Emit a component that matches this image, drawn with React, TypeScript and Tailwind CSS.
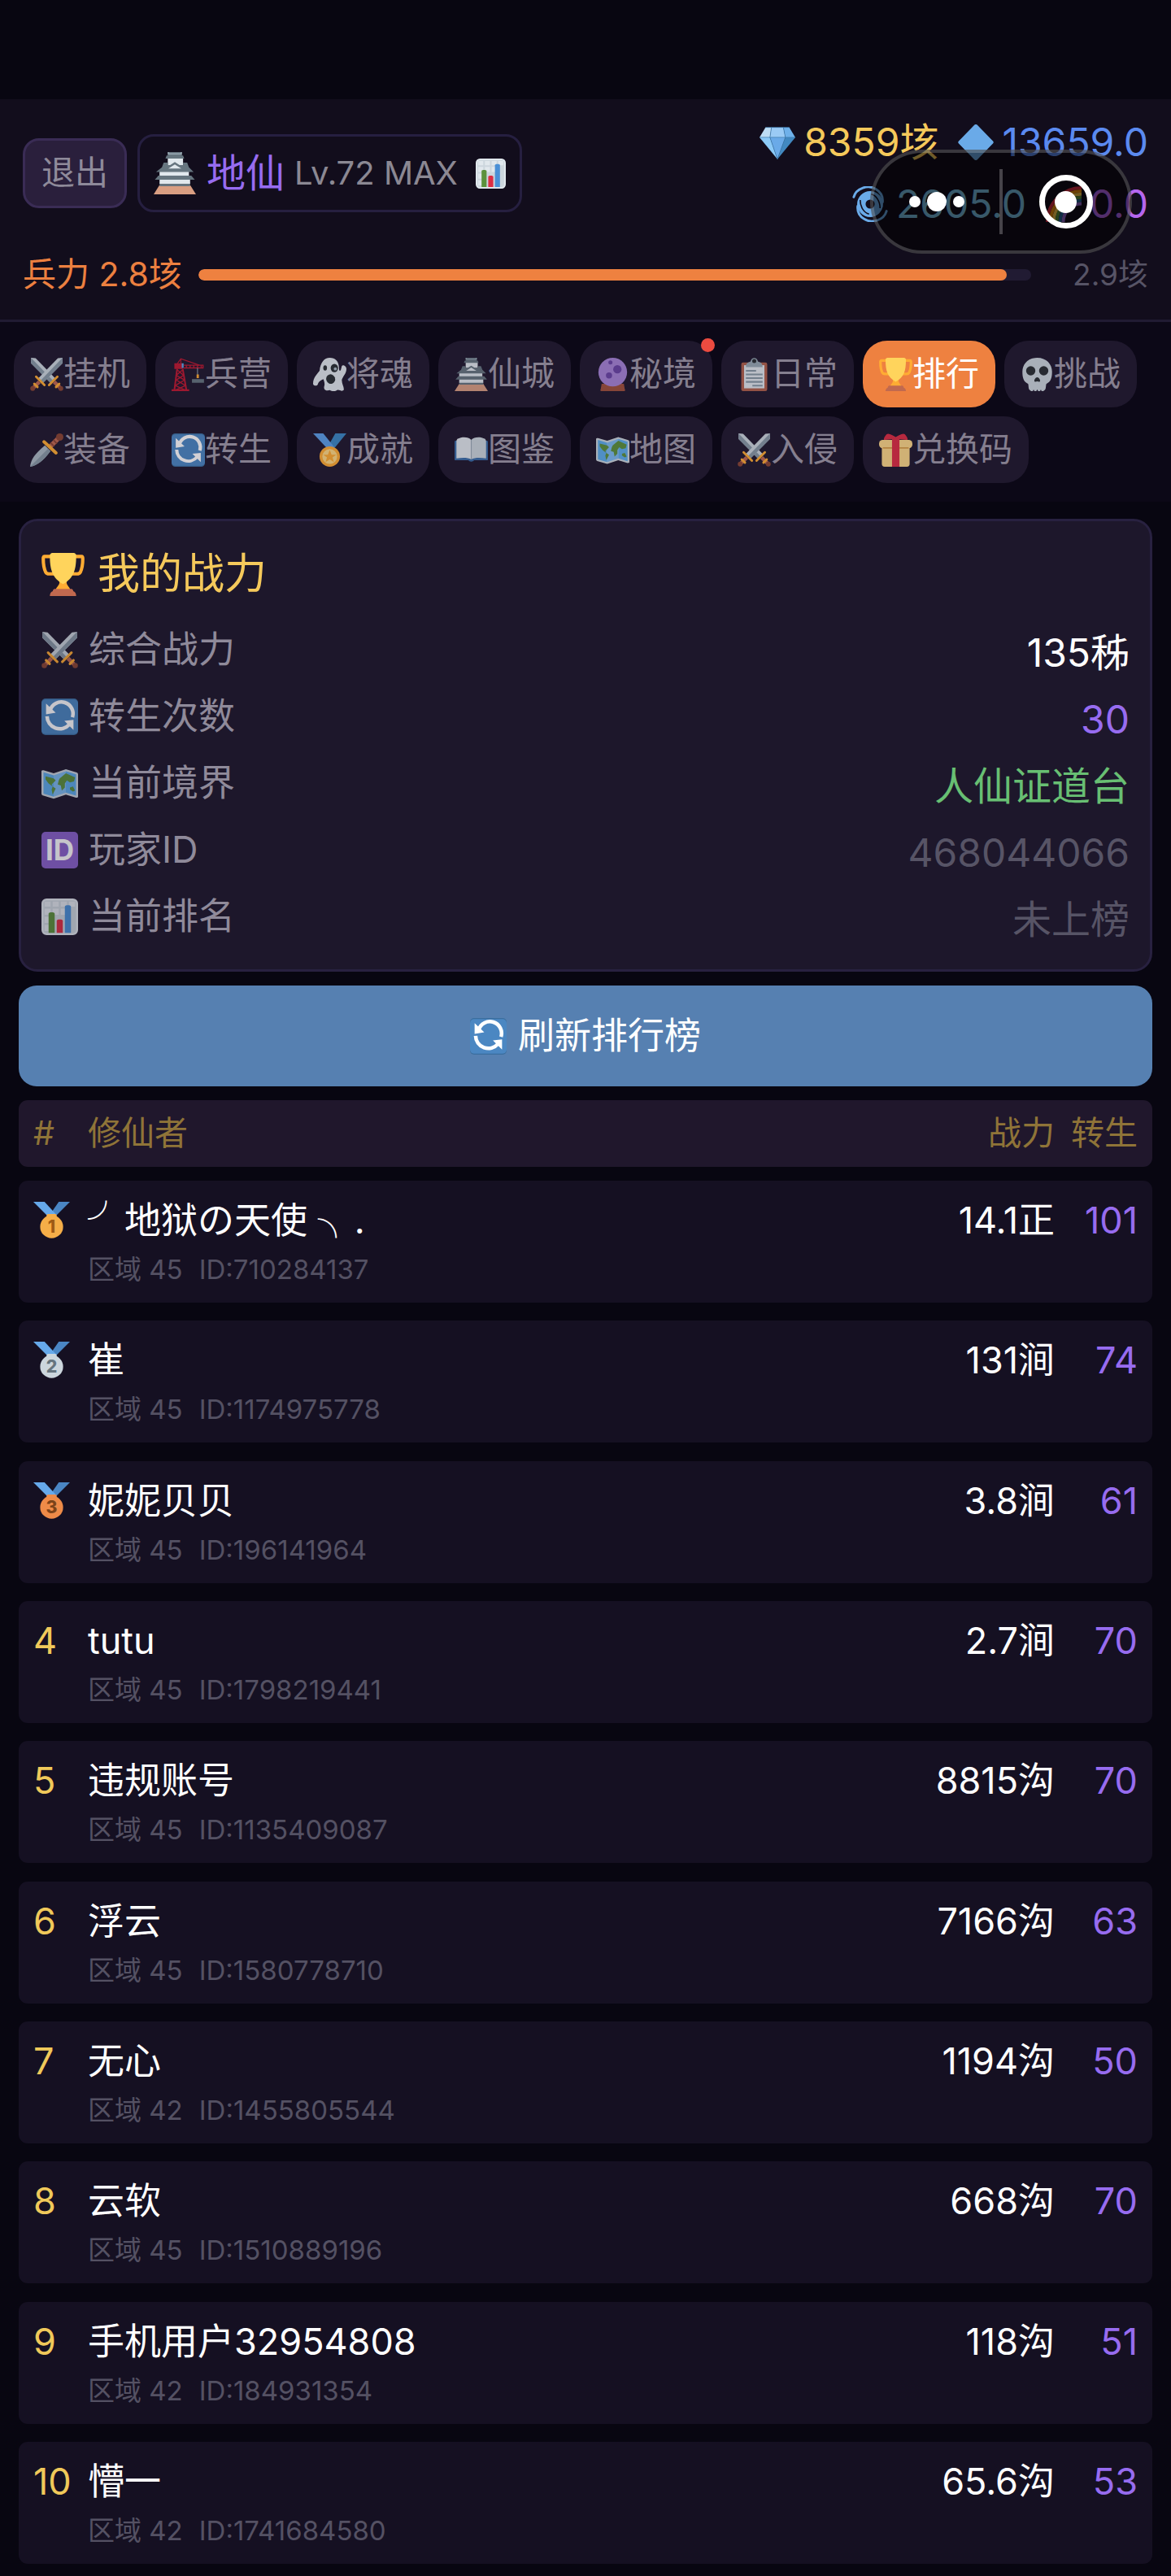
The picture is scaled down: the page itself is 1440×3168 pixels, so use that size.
import { useState } from 'react';
import type { ReactNode } from 'react';

type IconProps = { className?: string };

function Svg({ className = '', children }: { className?: string; children: ReactNode }) {
  return (
    <svg viewBox="0 0 36 36" className={`shrink-0 ${className}`} aria-hidden="true">
      {children}
    </svg>
  );
}

function Castle({ className }: IconProps) {
  return (
    <Svg className={className}>
      <path fill="#D99E82" d="M5 28h26l5 8H0z" />
      <path fill="#66757F" d="M5 26h26v3H5z" />
      <path fill="#E1E8ED" d="M5 23h26v4H5zM5 16h25v5H5zM12 4h13v7H12z" />
      <path fill="#66757F" d="M4 20h28l3 3.500H1zM11 3h14l1 2.500H10zM12 0h12v3H12z" />
      <path fill="#66757F" d="M8.500 9h3.500v2h2l4-2.500 4 2.500h3V9h3.500l1.500 4 4 4H2l5-4z" />
      <path fill="#E1E8ED" d="M18 10.500l5.500 3.500h-11z" />
      <path fill="#99AAB5" d="M12 0h1v1h10V0h1v2H12z" />
    </Svg>
  );
}

function Sword() {
  return (
    <g>
      <path fill="#CCD6DD" d="M1 0l5 .5L28 23l-5 5L1 6z" />
      <path fill="#8899A6" d="M1 0l24.500 25.500L23 28 1 6z" />
      <path stroke="#BF6952" strokeWidth="4" d="M26 26l6 6" />
      <path stroke="#FFAC33" strokeWidth="2.500" strokeLinecap="round" d="M20.500 29.500l9-9M28 31.500l3.500-3.500" />
      <circle cx="33.200" cy="33.200" r="2.600" fill="#8A4633" />
    </g>
  );
}

function Swords({ className }: IconProps) {
  return (
    <Svg className={className}>
      <Sword />
      <g transform="matrix(-1 0 0 1 36 0)">
        <Sword />
      </g>
    </Svg>
  );
}

function Dagger({ className }: IconProps) {
  return (
    <Svg className={className}>
      <path fill="#AAB8C2" d="M0 36c1-8 5-14 16-23l6 6C14 30 8 34 0 36z" />
      <path fill="#8899A6" d="M0 36L19.500 16.500 22 19C14 30 8 34 0 36z" />
      <path stroke="#BF6952" strokeWidth="5" d="M21 15l9-9" />
      <path stroke="#8A4633" strokeWidth="1.500" d="M22 10l4 4M25 7l4 4" />
      <path stroke="#FFAC33" strokeWidth="3.500" strokeLinecap="round" d="M15 9l13 12" />
      <circle cx="32" cy="4" r="4" fill="#8A4633" />
    </Svg>
  );
}

function Crane({ className }: IconProps) {
  return (
    <Svg className={className}>
      <path fill="none" stroke="#BE1931" strokeWidth="1" d="M5 8l5-7 20 7M10 1v7" />
      <path fill="#BE1931" d="M3 6h9v6H3zM0 34h19v2H0z" />
      <path fill="#55ACEE" d="M11 6h2v5h-2z" />
      <path fill="none" stroke="#BE1931" strokeWidth="1.200" d="M13 8h21v3H13M16 8v3M20 8v3M24 8v3M28 8v3M32 8v3" />
      <path fill="none" stroke="#BE1931" strokeWidth="1.800" d="M6 12L3 35M12 12l4 23" />
      <path fill="none" stroke="#BE1931" strokeWidth="1.200" d="M6 13l7 6-8 5 10 6-11 5M12 13l-7 6 9 5-10 6 11 5" />
      <path stroke="#8899A6" strokeWidth="1" d="M28 11v8" />
      <path fill="#FFAC33" d="M27 18h2.500v4H27z" />
      <path fill="#66757F" d="M22 23h13v4H22z" />
    </Svg>
  );
}

function Ghost({ className }: IconProps) {
  return (
    <Svg className={className}>
      <path
        fill="#E1E8ED"
        d="M18 0c6 0 10 4 10 11 0 3 1 4 2 2l1-4c1-2 5 0 5 3 0 5-4 8-5 12 0 5 3 8 2 11-2 2-5-1-7 0-3 2-6 1-8 0-3 1-7 0-6-4 1-3 0-6-1-8-2 1-5 2-6 6-1 2-5 1-5-1 0-7 5-11 7-14C8 5 12 0 18 0z"
      />
      <ellipse cx="13" cy="11" rx="2" ry="2.800" fill="#292F33" />
      <ellipse cx="23" cy="11" rx="4" ry="4.500" fill="#292F33" />
      <circle cx="24" cy="12" r="1.700" fill="#AAB8C2" />
      <ellipse cx="19" cy="23" rx="4.800" ry="5.200" fill="#292F33" transform="rotate(-20 19 23)" />
    </Svg>
  );
}

function CrystalBall({ className }: IconProps) {
  return (
    <Svg className={className}>
      <path fill="#A0513B" d="M6 28h24l1 6c1 1 0 2-1 2H6c-1 0-2-1-1-2z" />
      <circle cx="18" cy="15.500" r="15.500" fill="#A684D6" />
      <g fill="#6A45A6">
        <ellipse cx="23" cy="12.500" rx="4.500" ry="4.500" />
        <circle cx="14" cy="19" r="3.300" />
        <circle cx="15.500" cy="5" r="2.200" />
      </g>
    </Svg>
  );
}

function Clipboard({ className }: IconProps) {
  return (
    <Svg className={className}>
      <rect x="4" y="5" width="28" height="31" rx="2" fill="#B0614B" />
      <path fill="#E1E8ED" d="M7 8h22v25H7z" />
      <path fill="#99AAB5" d="M9 10c0-5 3-5 5-6 1-5 7-5 8 0 2 1 5 1 5 6z" />
      <circle cx="18" cy="3.500" r="2.200" fill="#292F33" />
      <path stroke="#8899A6" strokeWidth="1.800" d="M9 14h11M9 18h18M9 22h18M9 26h18M16 30h11" />
    </Svg>
  );
}

function Trophy({ className }: IconProps) {
  return (
    <Svg className={className}>
      <path
        fill="none"
        stroke="#FFAC33"
        strokeWidth="2.800"
        d="M8 3H2.500c-1 0-1 1-1 2 0 4 1 9 2 11 .500 1 1.500 1.500 3 1.500H13M28 3h5.500c1 0 1 1 1 2 0 4-1 9-2 11-.500 1-1.500 1.500-3 1.500H23"
      />
      <path fill="#FFAC33" d="M15 21h6v4c0 2 3 4 3 6H12c0-2 3-4 3-6z" />
      <path fill="#FFD45C" d="M7 2c0-1 1-2 2-2h18c1 0 2 1 2 2 0 12-2 19-11 24C9 21 7 14 7 2z" />
      <path fill="#C1694F" d="M11 30h14c1 0 1.500 1 1.500 2C28 32.500 29 34 29 36H7c0-2 1-3.500 2.500-4 0-1 .500-2 1.500-2z" />
    </Svg>
  );
}

function Skull({ className }: IconProps) {
  return (
    <Svg className={className}>
      <path
        fill="#CCD6DD"
        d="M18 0C8 0 2 7 2 15c0 6 1 11 6 13 1 1 0 5 2 7 2 2 4 1 4-1 1 3 3 3 4 0 1 3 3 3 4 0 0 2 2 3 4 1 2-2 1-6 2-7 5-2 6-7 6-13C34 7 28 0 18 0z"
      />
      <circle cx="11" cy="14" r="5" fill="#292F33" />
      <circle cx="25" cy="14" r="5" fill="#292F33" />
      <path fill="#292F33" d="M18 21c2 0 3.500 3 3 4.500-1 1-2 0-3 0s-2 1-3 0c-.500-1.500 1-4.500 3-4.500z" />
    </Svg>
  );
}

function Refresh({ className }: IconProps) {
  return (
    <Svg className={className}>
      <rect width="36" height="36" rx="4" fill="#3B6E9E" />
      <rect y="1" width="36" height="34" rx="4" fill="#4B87C2" />
      <path
        fill="none"
        stroke="#fff"
        strokeWidth="3.600"
        d="M8.500 11.500A11.500 11.500 0 0 1 30.500 18.500M5.500 17.500A12.500 12.500 0 0 0 27.500 25.500"
      />
      <path fill="#fff" d="M4.500 5v10.500L14 14zM31.500 31V21l-9 1z" />
    </Svg>
  );
}

function Medal({ className }: IconProps) {
  return (
    <Svg className={className}>
      <path fill="#3B88C3" d="M24 0h12l-13 16h-8z" />
      <path fill="#5C9FE6" d="M0 0h11l12 15-8 1z" />
      <circle cx="18" cy="25" r="11" fill="#FFAC33" />
      <circle cx="18" cy="25" r="8" fill="#FFD983" />
      <path fill="#FFAC33" d="M18 18l2 5h5l-4 3 1.500 5-4.500-3-4.500 3 1.500-5-4-3h5z" />
    </Svg>
  );
}

function Book({ className }: IconProps) {
  return (
    <Svg className={className}>
      <path fill="#3B6EA8" d="M1 8h34c1 0 1 1 1 2v18c0 1-1 1-1 1H21c-1 2-5 2-6 0H1c-1 0-1-1-1-1V10c0-1 0-2 1-2z" />
      <path fill="#E1E8ED" d="M3 6c6-3 12-2 15 1v21c-4-2-9-2-16-1V8z" />
      <path fill="#CCD6DD" d="M33 6c-6-3-12-2-15 1v21c4-2 9-2 16-1V8z" />
      <path stroke="#99AAB5" d="M18 7v21" />
    </Svg>
  );
}

function WorldMap({ className }: IconProps) {
  return (
    <Svg className={className}>
      <path fill="#CCD6DD" d="M0 6c0-1 1-1 2-1l10 3 12-4 10 3c1 0 2 1 2 2v22c0 1-1 1-2 1l-10-3-12 4-10-3c-1 0-2-1-2-2z" />
      <path fill="#5DADEC" d="M2 7l10 3v21L2 28z" />
      <path fill="#7DBBF0" d="M12 10l12-4v21l-12 4z" />
      <path fill="#5DADEC" d="M24 6l10 3v21l-10-3z" />
      <g fill="#5C913B">
        <path d="M4 11l8 2 2 2-4 4 1 2 3 2-3 6-1-5 1-3-4-3-3-4z" />
        <path d="M18 13l6-5 9 4-1 4-4 1-3-2-2 3v4l-3 3-1-5-3-1 1-4z" />
        <path d="M28 22l3-1 2 4-2 1-3-2z" />
      </g>
    </Svg>
  );
}

function Gift({ className }: IconProps) {
  return (
    <Svg className={className}>
      <rect x="3" y="12" width="30" height="24" rx="3" fill="#FDD888" />
      <rect y="7" width="36" height="9" rx="4" fill="#FDD888" />
      <path fill="#DA9F48" d="M4 15h28v1.500H4z" />
      <path fill="#DD2E44" d="M14 5h8v31h-8z" />
      <path fill="#DD2E44" d="M18 4C15 2 10-1 8 1 6 3 4 7 6 7l12-1 12 1c2 0 0-4-2-6-2-2-7 1-10 3z" />
    </Svg>
  );
}

function BarChart({ className }: IconProps) {
  return (
    <Svg className={className}>
      <rect x="1" y="1" width="34" height="34" rx="4" fill="#CCD6DD" />
      <path fill="#E1E8ED" d="M3 3h6v5H3zM11 3h6v5h-6zM19 3h6v5h-6zM27 3h6v5h-6zM3 10h6v6H3zM11 10h6v6h-6zM19 10h6v6h-6zM3 18h6v6H3zM3 26h6v6H3z" />
      <path fill="#5C913B" d="M7 15c0-1 1-1.500 3-1.500s3 .500 3 1.500v19H7z" />
      <path fill="#DD2E44" d="M15 22c0-1 1-1.500 3-1.500s3 .500 3 1.500v12h-6z" />
      <path fill="#4A90D6" d="M23 8c0-1 1-1.500 3-1.500s3 .500 3 1.500v26h-6z" />
      <rect x="1" y="1" width="34" height="34" rx="4" fill="none" stroke="#E1E8ED" strokeWidth="2" />
    </Svg>
  );
}

function IdBadge({ className }: IconProps) {
  return (
    <Svg className={className}>
      <rect width="36" height="36" rx="4" fill="#8A62CC" />
      <text x="18" y="28" textAnchor="middle" fontFamily="Inter" fontWeight="700" fontSize="28" fill="#fff">
        ID
      </text>
    </Svg>
  );
}

function Gem({ className }: IconProps) {
  return (
    <Svg className={className}>
      <path fill="#BDDDF4" d="M6 3h6l-1.500 10H0z" />
      <path fill="#9BCBF5" d="M12 3h12l2 10H10.500z" />
      <path fill="#6FB1EA" d="M24 3h6l6 10H26z" />
      <path fill="#8CCAF7" d="M0 13h10.500L18 35z" />
      <path fill="#6AAAE8" d="M10.500 13H26l-8 22z" />
      <path fill="#4289C1" d="M26 13h10L18 35z" />
      <path fill="none" stroke="#3E7CAE" strokeWidth=".600" d="M0 13h36M6 3h24M12 3l-1.500 10L18 35l8-22-2-10" />
    </Svg>
  );
}

function BlueDiamond({ className }: IconProps) {
  return (
    <Svg className={className}>
      <path fill="#6AAAE8" d="M16.500.700c.800-1 2.200-1 3 0l15.700 16c.800.800.800 1.800 0 2.600l-15.700 16c-.800 1-2.200 1-3 0L.800 19.300c-.800-.800-.800-1.800 0-2.600z" />
    </Svg>
  );
}

function Cyclone({ className }: IconProps) {
  return (
    <Svg className={className}>
      <circle cx="18" cy="18" r="8.800" fill="none" stroke="#6AAAE8" strokeWidth="8.500" />
      <path
        fill="none"
        stroke="#6AAAE8"
        strokeWidth="2.400"
        strokeLinecap="round"
        d="M1.500 11C4 2 16-2 24 3c5 3 7 8 6.500 13M34.500 25C32 34 20 38 12 33c-5-3-7-8-6.500-13"
      />
      <path fill="none" stroke="#120d1c" strokeWidth="1.300" d="M8 14c0 7 4 13 9 14M28 22c0-7-4-13-9-14" />
    </Svg>
  );
}

function Rainbow({ className }: IconProps) {
  return (
    <Svg className={className}>
      <g fill="none" strokeWidth="3.200">
        <path stroke="#DD2E44" d="M1.600 36C1.600 17 17 1.600 36 1.600" />
        <path stroke="#F4900C" d="M4.800 36C4.800 19 19 4.800 36 4.800" />
        <path stroke="#FFCC4D" d="M8 36C8 21 21 8 36 8" />
        <path stroke="#5C913B" d="M11.200 36c0-14 11-24.800 24.800-24.800" />
        <path stroke="#226699" d="M14.400 36c0-12 10-21.600 21.600-21.600" />
        <path stroke="#9266CC" d="M17.600 36c0-10 8-18.400 18.400-18.400" />
      </g>
    </Svg>
  );
}

const medalColors = [
  { disc: '#F5AE48', digit: '#9E5A14' },
  { disc: '#CCD6DD', digit: '#66757F' },
  { disc: '#EE8B48', digit: '#7C4419' },
];

function RankMedal({ rank, className }: IconProps & { rank: number }) {
  const { disc, digit } = medalColors[rank - 1];
  return (
    <Svg className={className}>
      <path fill="#4A86C4" d="M25 0h11L22 14l-6-1z" />
      <path fill="#66A9EA" d="M0 0h11l11 12-7 3z" />
      <circle cx="18" cy="24.500" r="11.300" fill={disc} />
      <rect x="13" y="12" width="10" height="4" rx="1.500" fill={disc} />
      <text x="18" y="30.500" textAnchor="middle" fontFamily="Inter" fontWeight="800" fontSize="17" fill={digit}>
        {rank}
      </text>
    </Svg>
  );
}

const tabs = [
  { label: '挂机', icon: Swords },
  { label: '兵营', icon: Crane },
  { label: '将魂', icon: Ghost },
  { label: '仙城', icon: Castle },
  { label: '秘境', icon: CrystalBall, dot: true },
  { label: '日常', icon: Clipboard },
  { label: '排行', icon: Trophy },
  { label: '挑战', icon: Skull },
  { label: '装备', icon: Dagger },
  { label: '转生', icon: Refresh },
  { label: '成就', icon: Medal },
  { label: '图鉴', icon: Book },
  { label: '地图', icon: WorldMap },
  { label: '入侵', icon: Swords },
  { label: '兑换码', icon: Gift },
];

const stats = [
  { label: '综合战力', value: '135秭', icon: Swords, color: 'text-white' },
  { label: '转生次数', value: '30', icon: Refresh, color: 'text-[#976cf0]' },
  { label: '当前境界', value: '人仙证道台', icon: WorldMap, color: 'text-[#68bf73]' },
  { label: '玩家ID', value: '468044066', icon: IdBadge, color: 'text-[#575466]' },
  { label: '当前排名', value: '未上榜', icon: BarChart, color: 'text-[#575466]' },
];

const players = [
  { name: '╯地狱の天使 ╮.', zone: 45, id: '710284137', power: '14.1正', rebirth: 101 },
  { name: '崔', zone: 45, id: '1174975778', power: '131涧', rebirth: 74 },
  { name: '妮妮贝贝', zone: 45, id: '196141964', power: '3.8涧', rebirth: 61 },
  { name: 'tutu', zone: 45, id: '1798219441', power: '2.7涧', rebirth: 70 },
  { name: '违规账号', zone: 45, id: '1135409087', power: '8815沟', rebirth: 70 },
  { name: '浮云', zone: 45, id: '1580778710', power: '7166沟', rebirth: 63 },
  { name: '无心', zone: 42, id: '1455805544', power: '1194沟', rebirth: 50 },
  { name: '云软', zone: 45, id: '1510889196', power: '668沟', rebirth: 70 },
  { name: '手机用户32954808', zone: 42, id: '184931354', power: '118沟', rebirth: 51 },
  { name: '懵一', zone: 42, id: '1741684580', power: '65.6沟', rebirth: 53 },
];

function Currency({ icon: Icon, value, color }: { icon: (p: IconProps) => ReactNode; value: string; color: string }) {
  return (
    <span className={`flex items-center gap-[10px] ${color}`}>
      <Icon className="size-[44px]" />
      {value}
    </span>
  );
}

function Capsule() {
  return (
    <div className="absolute top-[62px] right-[48px] flex h-[128px] w-[322px] items-center rounded-full border-4 border-white/20 bg-black/55">
      <button aria-label="更多" className="flex flex-1 items-center justify-center gap-2">
        <span className="size-[14px] rounded-full bg-white" />
        <span className="size-6 rounded-full bg-white" />
        <span className="size-[14px] rounded-full bg-white" />
      </button>
      <span className="h-20 w-1 bg-white/25" />
      <button aria-label="关闭" className="flex flex-1 items-center justify-center">
        <span className="flex size-[66px] items-center justify-center rounded-full border-[7px] border-white">
          <span className="size-[27px] rounded-full bg-white" />
        </span>
      </button>
    </div>
  );
}

function Header() {
  const troops = 97.1;
  return (
    <header className="relative border-b-[3px] border-[#211b33] bg-[#120d1c] px-7 pt-[15px] pb-7">
      <div className="flex items-center justify-between">
        <div className="flex items-center gap-[13px]">
          <button className="h-[86px] rounded-[20px] border-[3px] border-[#3a2c55] bg-[#2a1f3c] px-5 text-[41px] text-[#8f8a9a]">
            退出
          </button>
          <button className="flex h-[96px] items-center rounded-[20px] border-[3px] border-[#261f40] px-[17px]">
            <Castle className="size-[52px]" />
            <span className="ml-[13px] text-[48px] text-[#976cf0]">地仙</span>
            <span className="ml-3 text-[40px] text-[#8b8893]">Lv.72 MAX</span>
            <BarChart className="ml-[22px] size-[37px]" />
          </button>
        </div>
        <div className="flex flex-col items-end text-[48px] leading-[76px]">
          <div className="flex gap-6">
            <Currency icon={Gem} value="8359垓" color="text-[#f5c95b]" />
            <Currency icon={BlueDiamond} value="13659.0" color="text-[#5b8af0]" />
          </div>
          <div className="flex gap-6">
            <Currency icon={Cyclone} value="2605.0" color="text-[#7cc4e8]" />
            <Currency icon={Rainbow} value="0.0" color="text-[#b566ee]" />
          </div>
        </div>
      </div>
      <div className="mt-[21px] flex items-center gap-[20px] leading-[55px]">
        <span className="text-[41px] text-[#ec8040]">兵力 2.8垓</span>
        <div className="h-[14px] flex-1 overflow-hidden rounded-full bg-[#211b33]">
          <div className="h-full rounded-full bg-[#ee8140]" style={{ width: `${troops}%` }} />
        </div>
        <span className="w-[124px] text-right text-[37px] text-[#575466]">2.9垓</span>
      </div>
      <Capsule />
    </header>
  );
}

function TabBar() {
  const [active, setActive] = useState('排行');
  return (
    <nav className="flex flex-wrap gap-[11px] bg-[#0c0817] px-[17px] py-[23px]">
      {tabs.map(({ label, icon: Icon, dot }) => (
        <button
          key={label}
          onClick={() => setActive(label)}
          className={`relative flex h-[82px] items-center rounded-[30px] px-5 text-[41px] ${
            active === label ? 'bg-[#ee8140] text-white' : 'bg-[#1f182d] text-[#857f8f]'
          }`}
        >
          <Icon className={active === label ? 'size-[41px]' : 'size-[41px] opacity-80'} />
          {label}
          {dot && <span className="absolute -top-[3px] -right-[3px] size-[17px] rounded-full bg-[#eb4b40]" />}
        </button>
      ))}
    </nav>
  );
}

function PowerCard() {
  return (
    <section className="rounded-[23px] border-[3px] border-[#282140] bg-[#1d172b] px-[25px] pt-[31px] pb-[24px]">
      <h2 className="flex h-[68px] items-center gap-[16px] text-[52px] text-[#f5c95b]">
        <Trophy className="size-[53px]" />
        我的战力
      </h2>
      <dl className="mt-[18px]">
        {stats.map(({ label, value, icon: Icon, color }) => (
          <div key={label} className="flex h-[82px] items-center justify-between">
            <dt className="flex items-center gap-[13px] text-[45px] text-[#8f8a9a]">
              <Icon className="size-[45px] opacity-75" />
              {label}
            </dt>
            <dd className={`pt-2 text-[48px] ${color}`}>{value}</dd>
          </div>
        ))}
      </dl>
    </section>
  );
}

function Ranking() {
  return (
    <table className="flex flex-1 flex-col gap-[17px] text-left">
      <thead className="block">
        <tr className="grid h-[82px] grid-cols-[67px_1fr_auto_102px] items-center rounded-[11px] bg-[#20172c] px-[18px] text-[41px] text-[#8f7438]">
          <th className="font-normal">#</th>
          <th className="font-normal">修仙者</th>
          <th className="text-right font-normal">战力</th>
          <th className="text-right font-normal">转生</th>
        </tr>
      </thead>
      <tbody className="flex flex-1 flex-col justify-between">
        {players.map((p, i) => (
          <tr
            key={p.id}
            className="grid h-[150px] grid-cols-[67px_1fr_auto_102px] rounded-[11px] bg-[#151022] px-[18px] pt-[18px] text-[45px] leading-[62px] text-white"
          >
            <td className="text-[#f0c95a]">
              {i < 3 ? <RankMedal rank={i + 1} className="mt-2 size-[45px]" /> : i + 1}
            </td>
            <td>
              {p.name}
              <div className="flex gap-5 text-[33px] leading-[58px] text-[#545163]">
                <span>区域 {p.zone}</span>
                <span>ID:{p.id}</span>
              </div>
            </td>
            <td className="text-right">{p.power}</td>
            <td className="text-right text-[#976cf0]">{p.rebirth}</td>
          </tr>
        ))}
      </tbody>
    </table>
  );
}

export default function App() {
  return (
    <div className="flex min-h-screen flex-col bg-[#080611] pt-[122px] font-['Inter','Noto_Sans_CJK_SC',sans-serif]">
      <Header />
      <TabBar />
      <main className="flex flex-1 flex-col px-[23px] pt-[21px] pb-[15px]">
        <PowerCard />
        <button className="my-[17px] flex h-[124px] items-center justify-center gap-[14px] rounded-[22px] bg-[#5680b1] text-[45px] text-white">
          <Refresh className="size-[45px]" />
          刷新排行榜
        </button>
        <Ranking />
      </main>
    </div>
  );
}
